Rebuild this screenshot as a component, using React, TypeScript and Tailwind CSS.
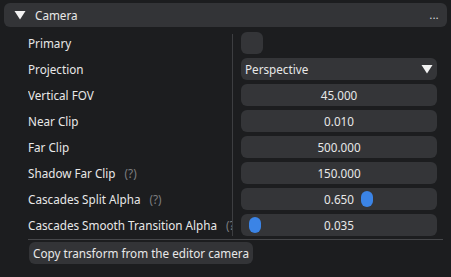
import React from "react";

type Row = {
    label: string;
    help?: boolean;
    kind: "check" | "combo" | "drag" | "slider";
    value?: string;
    t?: number;
};

const rows: Row[] = [
    { label: "Primary", kind: "check" },
    { label: "Projection", kind: "combo", value: "Perspective" },
    { label: "Vertical FOV", kind: "drag", value: "45.000" },
    { label: "Near Clip", kind: "drag", value: "0.010" },
    { label: "Far Clip", kind: "drag", value: "500.000" },
    { label: "Shadow Far Clip", help: true, kind: "drag", value: "150.000" },
    { label: "Cascades Split Alpha", help: true, kind: "slider", value: "0.650", t: 0.65 },
    { label: "Cascades Smooth Transition Alpha", help: true, kind: "slider", value: "0.035", t: 0.035 },
];

function Widget({ row }: { row: Row }) {
    if (row.kind === "check") {
        return <div className="h-[22px] w-[22px] rounded-[6px] bg-[#343538]" />;
    }
    if (row.kind === "combo") {
        return (
            <div className="flex h-[22px] items-center justify-between rounded-[6px] bg-[#343538] pl-[4px] pr-[4px]">
                <span className="pt-[2px]">{row.value}</span>
                <svg width="12" height="10" viewBox="0 0 12 10">
                    <path d="M0.5 1 L11.5 1 L6 9.5 Z" fill="#f2f2f2" />
                </svg>
            </div>
        );
    }
    return (
        <div className="relative flex h-[22px] items-center justify-center rounded-[6px] bg-[#343538]">
            {row.kind === "slider" && (
                <div
                    className="absolute top-[3px] h-[16px] w-[12px] rounded-full bg-[#3b84e6]"
                    style={{ left: 2 + (row.t ?? 0) * 182 }}
                />
            )}
            <span className="relative pt-[2px]">{row.value}</span>
        </div>
    );
}

export default function App() {
    return (
        <div
            className="h-[277px] w-[451px] overflow-hidden bg-[#1c1d1f] pt-[3px] text-[11.7px] leading-none text-[#e8e8e8]"
            style={{ fontFamily: '"Noto Sans", "Open Sans", sans-serif' }}
        >
            <div className="mx-[4px] flex h-[24px] items-center rounded-[6px] bg-[#333437] pl-[10px] pr-[8px]">
                <svg width="12" height="10" viewBox="0 0 12 10">
                    <path d="M0.5 1 L11.5 1 L6 9.5 Z" fill="#f2f2f2" />
                </svg>
                <span className="ml-[9px] pt-[1px]">Camera</span>
                <span className="ml-auto text-[10px] tracking-[0.5px]">...</span>
            </div>

            <div className="mt-[5px] flex pl-[28px]">
                <div className="flex w-[204px] flex-col gap-[4px] overflow-hidden">
                    {rows.map(r => (
                        <div key={r.label} className="flex h-[22px] items-center whitespace-nowrap pt-[2px]">
                            <span>{r.label}</span>
                            {r.help && <span className="ml-[9px] text-[#7c7d80]">(?)</span>}
                        </div>
                    ))}
                </div>
                <div className="mt-[2px] w-px bg-[#3d3e41]" />
                <div className="ml-[8px] flex w-[196px] flex-col gap-[4px]">
                    {rows.map(r => (
                        <Widget key={r.label} row={r} />
                    ))}
                </div>
            </div>

            <div className="ml-[28px] mr-[8px] mt-[3px] h-px bg-[#46474a]" />

            <div className="mt-[2px] pl-[29px]">
                <button className="flex h-[22px] items-center rounded-[6px] bg-[#333437] px-[4px] pt-[2px] text-[#e8e8e8]">
                    Copy transform from the editor camera
                </button>
            </div>
        </div>
    );
}
